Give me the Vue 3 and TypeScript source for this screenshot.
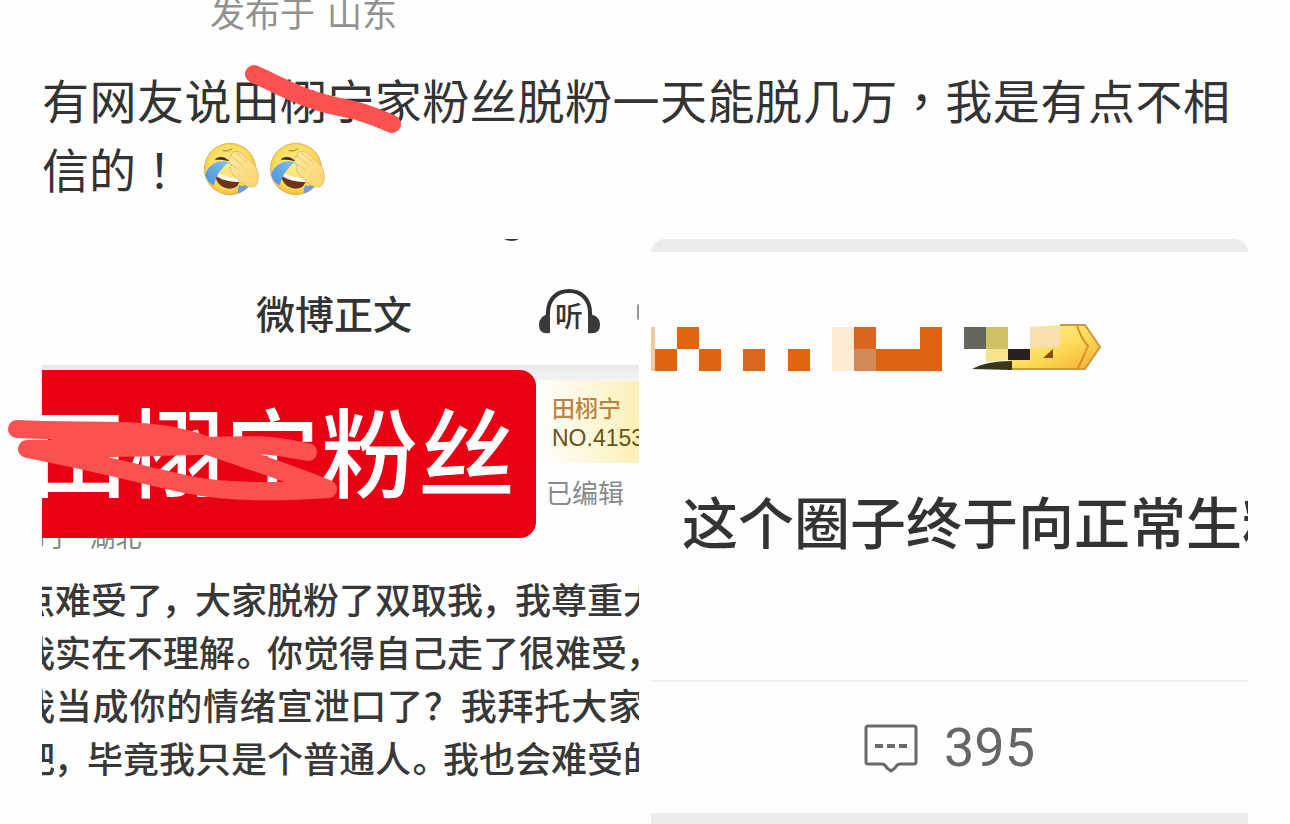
<script setup lang="ts">
interface Cell {
  x: number
  y: number
  w: number
  h: number
  fill: string
}

const message = '有网友说田栩宁家粉丝脱粉一天能脱几万，我是有点不相信的！'
const faces = [1, 2]

const commentLines: string[][] = [
  ['点难受了', '，', '大家脱粉了双取我', '，', '我尊重大'],
  ['我实在不理解', '。', '你觉得自己走了很难受', '，'],
  ['我当成你的情绪宣泄口了？我拜托大家'],
  ['吧', '，', '毕竟我只是个普通人', '。', '我也会难受的'],
]

const isStop = (part: string): boolean => part === '，' || part === '。'

const cells: Cell[] = [
  { x: 0, y: 4, w: 4, h: 44, fill: '#f6c79c' },
  { x: 26, y: 4, w: 22, h: 22, fill: '#e2640f' },
  { x: 4, y: 26, w: 22, h: 22, fill: '#dd6512' },
  { x: 48, y: 26, w: 22, h: 22, fill: '#dd6512' },
  { x: 92, y: 26, w: 22, h: 22, fill: '#d9681f' },
  { x: 137, y: 26, w: 22, h: 22, fill: '#e2640f' },
  { x: 181, y: 4, w: 22, h: 44, fill: '#fdebd3' },
  { x: 203, y: 4, w: 22, h: 22, fill: '#d9651f' },
  { x: 203, y: 26, w: 22, h: 22, fill: '#d28a58' },
  { x: 225, y: 26, w: 45, h: 22, fill: '#dd6413' },
  { x: 269, y: 4, w: 22, h: 44, fill: '#e06312' },
]
</script>

<template>
  <main class="page">
    <p class="place"><span>发布于</span><span>山东</span></p>

    <div class="message-wrap">
      <p class="message" lang="zh-Hant">{{ message
        }}<svg v-for="n in faces" :key="n" class="face" viewBox="0 0 168 168" role="img" aria-label="笑着捂脸">
          <defs>
            <radialGradient :id="'skin' + n" cx="50%" cy="45%" r="55%">
              <stop offset="0" stop-color="#fdee96" />
              <stop offset="0.75" stop-color="#fbdc5c" />
              <stop offset="1" stop-color="#efbd42" />
            </radialGradient>
            <linearGradient :id="'palm' + n" x1="0" y1="0" x2="1" y2="1">
              <stop offset="0" stop-color="#fdeaa0" />
              <stop offset="1" stop-color="#fad471" />
            </linearGradient>
            <linearGradient :id="'tear' + n" x1="1" y1="0" x2="0" y2="1">
              <stop offset="0" stop-color="#7cc4f2" />
              <stop offset="1" stop-color="#4a8edc" />
            </linearGradient>
          </defs>
          <circle cx="81" cy="81" r="77" :fill="`url(#skin${n})`" stroke="#c9a04a" stroke-width="2" />
          <path d="M60 26q14 5 27-5" fill="none" stroke="#a87b2a" stroke-width="3" stroke-linecap="round" />
          <path d="M37 52q18-14 40 4q-22-6-40-4z" fill="#3f2411" stroke="#3f2411" stroke-width="2" />
          <path d="M34 90q28 22 76 22q0 28-30 28q-40-2-46-50z" fill="#6d3515" />
          <path d="M38 89q28 17 72 21l1 10q-46 0-73-19z" fill="#fffaf3" />
          <path d="M41 61q20-6 37-1q-34 24-46 70q-18-9-26-32q9-27 35-37z" :fill="`url(#tear${n})`" />
          <path d="M108 130q16 6 34-6q-13 24-38 30q-1-12 4-24z" fill="#6a9ee2" />
          <path
            d="M78 58q-3-15 8-18q-2-11 9-11q9-4 20 4l33 30q14 10 17 30q4 28-9 40q-20 8-42-12q-22-18-30-33q-5-12 0-17q-6-5-6-13z"
            :fill="`url(#palm${n})`" stroke="#d8ab55" stroke-width="2" />
          <path d="M84 42l34 26M97 32l34 28M83 66l26 18" fill="none" stroke="#e0b765" stroke-width="2"
            stroke-linecap="round" />
        </svg></p>
      <svg class="mark-message" viewBox="0 0 160 72" aria-hidden="true">
        <path d="M11 10C32 19 50 31 80 39S112 44 149 60" />
      </svg>
    </div>

    <div class="gallery">
      <div class="tile-wrap">
        <section class="tile">
          <header class="bar">
            <svg class="bar-speck" viewBox="0 0 20 4" aria-hidden="true">
              <path d="M2 0q8 4 15 0z" fill="#333" />
            </svg>
            <h2 class="bar-title">微博正文</h2>
            <div class="listen">
              <svg viewBox="0 0 64 50" aria-hidden="true">
                <path d="M11 43V26C11 12 20 4 32 4s21 8 21 22v17" fill="none" stroke="#333" stroke-width="4" />
                <path d="M13 27v19q-11 2-11-8t11-11zM51 27v19q12 2 12-8T51 27z" fill="#3a3a3a" />
              </svg>
              <span class="listen-label">听</span>
            </div>
            <span class="bar-more"></span>
          </header>

          <div class="badge-row">
            <p class="banner">田栩宁粉丝</p>
            <div class="side">
              <div class="fan-card">
                <span class="fan-name">田栩宁</span>
                <span class="fan-no">NO.4153</span>
              </div>
              <span class="edited">已编辑</span>
            </div>
          </div>

          <p class="origin">布于&nbsp;&nbsp; 湖北</p>

          <div class="comment">
            <p v-for="(line, i) in commentLines" :key="i">
              <span v-for="(part, j) in line" :key="j" :class="{ stop: isStop(part) }">{{ part }}</span>
            </p>
          </div>
        </section>
        <svg class="mark-banner" viewBox="0 0 340 90" aria-hidden="true">
          <path d="M17 18C90 22 150 14 200 32S290 62 328 78C270 82 220 80 190 74S90 50 27 38C100 38 130 37 200 35S270 34 308 41" />
          <path d="M60 30L190 34" />
        </svg>
      </div>

      <section class="tile tile-right">
        <div class="cap"></div>
        <svg class="mosaic" viewBox="0 0 460 52" aria-hidden="true">
          <defs>
            <linearGradient id="gold" x1="0" y1="0" x2="1" y2="1">
              <stop offset="0" stop-color="#fff3a8" />
              <stop offset="0.55" stop-color="#fddc58" />
              <stop offset="1" stop-color="#f2ac35" />
            </linearGradient>
          </defs>
          <rect v-for="(c, i) in cells" :key="i" :x="c.x" :y="c.y" :width="c.w" :height="c.h" :fill="c.fill" />
          <path d="M357 36l22-10V4l30-2h25l15 22-15 22h-77z" fill="url(#gold)" />
          <path d="M357 46h77l15-22-15-22h-25" fill="none" stroke="#c79a3c" stroke-width="2" />
          <path d="M426 3q4 12 11 20q-4 10-10 22" fill="none" stroke="#d98f2c" stroke-width="2" />
          <path d="M321 46q14-8 40-8v9z" fill="#38351b" />
          <path d="M335 26h22v11l-22 2z" fill="#f6e38e" />
          <path d="M313 4h22v22h-22z" fill="#66665f" />
          <path d="M335 4h22v22h-22z" fill="#cfc063" />
          <path d="M379 4h30v20h-30z" fill="#fadfae" />
          <path d="M357 26h22v11h-22z" fill="#29211f" />
          <path d="M392 35l10-9v9z" fill="#8a4a12" />
        </svg>
        <p class="headline">这个圈子终于向正常生粉</p>
        <footer class="replies">
          <svg class="reply-icon" viewBox="0 0 54 50" aria-hidden="true">
            <path d="M4 3h46q2 0 2 2v34q0 2-2 2H36q-3 0-5 4l-4 3-4-3q-2-4-5-4H4q-2 0-2-2V5q0-2 2-2z" fill="none"
              stroke="#6a6a6a" stroke-width="3" stroke-linejoin="round" />
            <path d="M11 23h8M23 23h8M35 23h8" stroke="#6a6a6a" stroke-width="4" />
          </svg>
          <span>395</span>
        </footer>
        <div class="cap-bottom"></div>
      </section>
    </div>
  </main>
</template>

<style>
body {
  margin: 0;
  background: #fefefe;
}
</style>

<style scoped>
.page {
  box-sizing: border-box;
  height: 100vh;
  overflow: hidden;
  padding: 0 42px;
  background: #fefefe;
  color: #333;
  font-family: "Noto Sans CJK SC", sans-serif;
}

p,
h2 {
  margin: 0;
}

.place {
  display: flex;
  gap: 12px;
  padding-left: 168px;
  font-size: 35px;
  line-height: 24px;
  color: #919191;
}

.message-wrap {
  position: relative;
  margin-top: 40px;
  padding-right: 18px;
}

.message {
  font-family: "Noto Sans CJK TC", sans-serif;
  font-size: 47px;
  line-height: 69px;
  text-align: justify;
}

.face {
  width: 56px;
  height: 56px;
  margin-left: 10px;
  vertical-align: -10px;
}

.face:first-of-type {
  margin-left: 20px;
}

.mark-message,
.mark-banner {
  position: absolute;
  z-index: 2;
  fill: none;
  stroke: #fd5151;
  stroke-width: 18;
  stroke-linecap: round;
  stroke-linejoin: round;
}

.mark-message {
  left: 201px;
  top: 0;
  width: 160px;
}

.mark-banner {
  left: -42px;
  top: 172px;
  width: 340px;
}

.gallery {
  display: grid;
  grid-template-columns: 1fr 1fr;
  gap: 12px;
  margin-top: 37px;
}

.tile-wrap {
  position: relative;
  min-width: 0;
}

.tile {
  min-width: 0;
  aspect-ratio: 1;
  overflow: hidden;
  white-space: nowrap;
}

.bar {
  position: relative;
  display: flex;
  align-items: center;
  box-sizing: border-box;
  height: 126px;
  padding: 20px 0 0 214px;
}

.bar-speck {
  position: absolute;
  left: 460px;
  top: 0;
  width: 20px;
}

.bar-title {
  flex: 1;
  font-size: 39px;
  line-height: 48px;
  font-weight: 500;
}

.listen {
  position: relative;
  width: 64px;
  height: 50px;
  margin-right: 36px;
}

.listen svg {
  display: block;
}

.listen-label {
  position: absolute;
  left: 18px;
  top: 12px;
  font-size: 28px;
  line-height: 32px;
  font-weight: 500;
}

.bar-more {
  width: 2px;
  height: 16px;
  border-radius: 2px 0 0 2px;
  background: #999;
}

.badge-row {
  display: flex;
  background: linear-gradient(#e9e9e9, #f1f1f1 14px, #fefefe 18px);
}

.banner {
  position: relative;
  z-index: 1;
  width: 494px;
  height: 168px;
  margin-top: 5px;
  border-radius: 0 16px 16px 0;
  background: #ea0013;
  color: #fff;
  font-size: 97px;
  line-height: 156px;
  font-weight: 500;
  text-indent: -12px;
}

.side {
  flex: 1;
  min-width: 0;
  padding-top: 16px;
}

.fan-card {
  display: flex;
  flex-direction: column;
  height: 82px;
  padding: 12px 0 0 16px;
  box-sizing: border-box;
  background: linear-gradient(90deg, #fefefe, #fdf8dc 50%, #faf0b8);
}

.fan-name {
  font-size: 23px;
  line-height: 28px;
  font-weight: 500;
  color: #bd8242;
}

.fan-no {
  font-family: "Liberation Sans", sans-serif;
  font-size: 23px;
  line-height: 34px;
  color: #6b5218;
}

.edited {
  display: block;
  padding-left: 10px;
  font-size: 26px;
  line-height: 58px;
  color: #8a8a8a;
}

.origin {
  margin: -18px 0 0 -22px;
  font-size: 26px;
  line-height: 32px;
  color: #858585;
}

.comment {
  width: calc(100% + 28px);
  margin: 20px 0 0 -23px;
  color: #383838;
  font-size: 36px;
  line-height: 53px;
  font-weight: 500;
  text-align: justify;
  text-align-last: justify;
}

.stop {
  margin: 0 13px 0 1px;
  font-feature-settings: "palt";
}

.tile-right {
  display: flex;
  flex-direction: column;
  border-radius: 14px;
}

.cap {
  height: 13px;
  background: #ececec;
}

.mosaic {
  display: block;
  width: 460px;
  height: 52px;
  margin-top: 71px;
}

.headline {
  margin-top: 103px;
  padding-left: 31px;
  font-size: 56px;
  line-height: 84px;
  font-weight: 500;
}

.replies {
  display: flex;
  align-items: center;
  justify-content: center;
  gap: 26px;
  height: 131px;
  margin-top: 118px;
  border-top: 2px solid #efefef;
  color: #666;
  font-family: Roboto, sans-serif;
  font-size: 54px;
}

.reply-icon {
  width: 54px;
  height: 50px;
}

.cap-bottom {
  flex: 1;
  background: #ececec;
}
</style>
